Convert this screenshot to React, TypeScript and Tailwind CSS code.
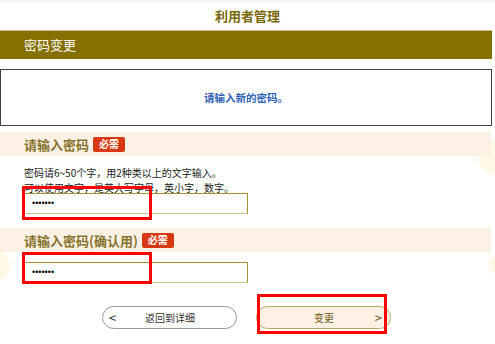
import React from 'react';

const FONT = { fontFamily: '"Noto Sans CJK SC", "Noto Sans", sans-serif' };

function Badge() {
  return (
    <span className="ml-[4px] inline-flex h-[15px] w-[32px] items-center justify-center rounded-[2px] bg-[#d8380f] text-[10px] font-bold leading-none text-white">
      必需
    </span>
  );
}

function SectionHead({ label }: { label: string }) {
  return (
    <div className="flex h-[24px] w-[491px] items-center bg-[#fdf1e5] pl-[24px]">
      <span className="text-[13px] font-bold leading-none text-[#85732c]">{label}</span>
      <Badge />
    </div>
  );
}

function PwInput() {
  return (
    <div className="ml-[24px] flex h-[21px] w-[224px] items-center border border-[#a4922a] border-b-[#c9c09a] bg-white pl-[7px]">
      <span className="font-['Liberation_Sans',sans-serif] text-[9px] leading-none text-black">•••••••</span>
    </div>
  );
}

export default function App() {
  return (
    <div className="relative h-[344px] w-[495px] overflow-hidden bg-white" style={FONT}>
      {/* ── background accents ── */}
      <div className="absolute left-[478px] top-[141px] h-[33px] w-[33px] rounded-full bg-[#fef8e6]" />
      <div className="absolute left-[-22px] top-[250px] h-[32px] w-[32px] rounded-full bg-[#fef8e6]" />
      <div className="absolute left-[488px] top-[256px] h-[17px] w-[17px] rounded-full bg-[#fef8e6]" />

      <div className="relative">
        <div className="h-[2px] bg-[#f4f4f4]" />
        <div className="flex h-[28px] items-center justify-center">
          <span className="text-[13px] font-bold text-[#7a6806]">利用者管理</span>
        </div>

        <div className="flex h-[29px] w-[492px] items-center border-t border-[#c9bd85] bg-[#857000] pl-[24px]">
          <span className="text-[13px] text-white">密码变更</span>
        </div>

        <div className="mt-[10px] flex h-[57px] w-[492px] items-center justify-center border border-[#444] bg-white">
          <span className="text-[10.5px] font-bold text-[#2f5fb5]">请输入新的密码。</span>
        </div>

        <div className="mt-[6px]">
          <SectionHead label="请输入密码" />
        </div>
        <div className="ml-[24px] mt-[9px] text-[10px] leading-[15px] text-[#222]">
          <div>密码请6~50个字，用2种类以上的文字输入。</div>
          <div>可以使用文字，是英大写字母，英小字，数字。</div>
        </div>
        <div className="-mt-[2px]">
          <PwInput />
        </div>

        <div className="mt-[14px]">
          <SectionHead label="请输入密码(确认用)" />
        </div>
        <div className="mt-[10px]">
          <PwInput />
        </div>

        <div className="mt-[23px] flex">
          <button className="ml-[102px] flex h-[23px] w-[135px] items-center rounded-full border border-[#999] bg-white pl-[6px] pr-[8px] text-[10px] text-[#333]">
            <span className="text-[13px] leading-none">&lt;</span>
            <span className="flex-1 pr-[4px] text-center">返回到详细</span>
          </button>
          <button className="ml-[19px] flex h-[23px] w-[135px] items-center rounded-full border border-[#b8a862] bg-[#fdf1e5] px-[8px] text-[10px] text-[#6b5a14]">
            <span className="flex-1 pl-[8px] text-center">变更</span>
            <span className="text-[13px] leading-none">&gt;</span>
          </button>
        </div>
      </div>

      {/* ── annotation boxes ── */}
      <div className="absolute left-[22px] top-[186px] h-[34px] w-[130px] border-[3px] border-[#ff0000]" />
      <div className="absolute left-[22px] top-[252px] h-[32px] w-[130px] border-[3px] border-[#ff0000]" />
      <div className="absolute left-[257px] top-[294px] h-[40px] w-[130px] border-[3px] border-[#ff0000]" />
    </div>
  );
}
